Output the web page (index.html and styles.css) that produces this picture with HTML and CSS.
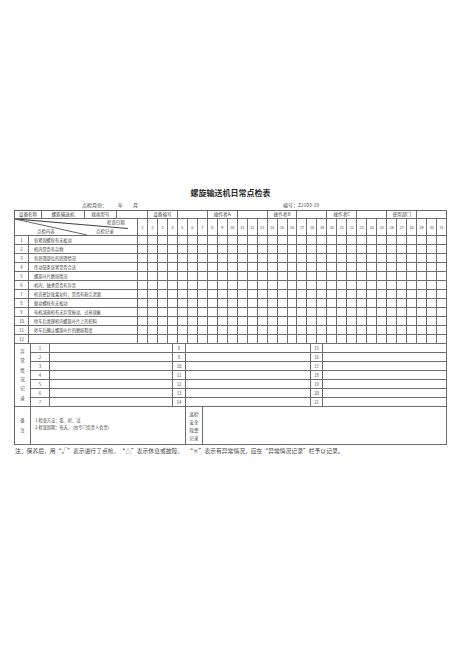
FILE: index.html
```html
<!DOCTYPE html>
<html lang="zh">
<head>
<meta charset="utf-8">
<title>螺旋输送机日常点检表</title>
<link rel="stylesheet" href="styles.css">
</head>
<body>
<div class="sheet">
  <h1 class="title">螺旋输送机日常点检表</h1>
  <div class="meta">
    <span></span>
    <span class="month">点检月份：<span class="yr">年</span><span class="mo">月</span></span>
    <span class="code">编号：ZJ103-19</span>
  </div>
  <div class="form">
    <div class="rowa">
      <span>设备名称</span><span>螺旋输送机</span><span>规格型号</span><span class="s2"></span>
      <span class="s3">设备编号</span><span class="s3"></span>
      <span class="s3">操作者A</span><span class="s3"></span>
      <span class="s3">操作者B</span><span class="s3"></span>
      <span class="s3">操作者C</span><span class="s3"></span>
      <span class="s3">使用部门</span><span class="s3"></span>
    </div>
    <div class="chk">
      <span class="diag">
        <svg class="diag-lines" viewBox="0 0 122 16" width="122" height="16"><line x1="0" y1="0" x2="113" y2="9.5" stroke="#444" stroke-width="1.2"/><line x1="0" y1="0" x2="72" y2="16" stroke="#555" stroke-width="0.9"/></svg>
        <em class="lb lb-date">检查日期</em><em class="lb lb-item">点检内容</em><em class="lb lb-rec">点检记录</em>
      </span>
      <span class="h">1</span><span class="h">2</span><span class="h">3</span><span class="h">4</span><span class="h">5</span><span class="h">6</span><span class="h">7</span><span class="h">8</span><span class="h">9</span><span class="h">10</span><span class="h">11</span><span class="h">12</span><span class="h">13</span><span class="h">14</span><span class="h">15</span><span class="h">16</span><span class="h">17</span><span class="h">18</span><span class="h">19</span><span class="h">20</span><span class="h">21</span><span class="h">22</span><span class="h">23</span><span class="h">24</span><span class="h">25</span><span class="h">26</span><span class="h">27</span><span class="h">28</span><span class="h">29</span><span class="h">30</span><span class="h">31</span>

      <span class="n">1</span><span class="t">各紧固螺栓有无松动</span><span></span><span></span><span></span><span></span><span></span><span></span><span></span><span></span><span></span><span></span><span></span><span></span><span></span><span></span><span></span><span></span><span></span><span></span><span></span><span></span><span></span><span></span><span></span><span></span><span></span><span></span><span></span><span></span><span></span><span></span><span></span>
      <span class="n">2</span><span class="t">机内是否有杂物</span><span></span><span></span><span></span><span></span><span></span><span></span><span></span><span></span><span></span><span></span><span></span><span></span><span></span><span></span><span></span><span></span><span></span><span></span><span></span><span></span><span></span><span></span><span></span><span></span><span></span><span></span><span></span><span></span><span></span><span></span><span></span>
      <span class="n">3</span><span class="t">各润滑部位的润滑情况</span><span></span><span></span><span></span><span></span><span></span><span></span><span></span><span></span><span></span><span></span><span></span><span></span><span></span><span></span><span></span><span></span><span></span><span></span><span></span><span></span><span></span><span></span><span></span><span></span><span></span><span></span><span></span><span></span><span></span><span></span><span></span>
      <span class="n">4</span><span class="t">传动链条张紧是否合适</span><span></span><span></span><span></span><span></span><span></span><span></span><span></span><span></span><span></span><span></span><span></span><span></span><span></span><span></span><span></span><span></span><span></span><span></span><span></span><span></span><span></span><span></span><span></span><span></span><span></span><span></span><span></span><span></span><span></span><span></span><span></span>
      <span class="n">5</span><span class="t">螺旋叶片磨损情况</span><span></span><span></span><span></span><span></span><span></span><span></span><span></span><span></span><span></span><span></span><span></span><span></span><span></span><span></span><span></span><span></span><span></span><span></span><span></span><span></span><span></span><span></span><span></span><span></span><span></span><span></span><span></span><span></span><span></span><span></span><span></span>
      <span class="n">6</span><span class="t">机内、轴承是否有异音</span><span></span><span></span><span></span><span></span><span></span><span></span><span></span><span></span><span></span><span></span><span></span><span></span><span></span><span></span><span></span><span></span><span></span><span></span><span></span><span></span><span></span><span></span><span></span><span></span><span></span><span></span><span></span><span></span><span></span><span></span><span></span>
      <span class="n">7</span><span class="t">机壳密封效果如何，是否有粉尘泄漏</span><span></span><span></span><span></span><span></span><span></span><span></span><span></span><span></span><span></span><span></span><span></span><span></span><span></span><span></span><span></span><span></span><span></span><span></span><span></span><span></span><span></span><span></span><span></span><span></span><span></span><span></span><span></span><span></span><span></span><span></span><span></span>
      <span class="n">8</span><span class="t">驱动螺栓有无松动</span><span></span><span></span><span></span><span></span><span></span><span></span><span></span><span></span><span></span><span></span><span></span><span></span><span></span><span></span><span></span><span></span><span></span><span></span><span></span><span></span><span></span><span></span><span></span><span></span><span></span><span></span><span></span><span></span><span></span><span></span><span></span>
      <span class="n">9</span><span class="t">电机减速机有无异常振动、过热现象</span><span></span><span></span><span></span><span></span><span></span><span></span><span></span><span></span><span></span><span></span><span></span><span></span><span></span><span></span><span></span><span></span><span></span><span></span><span></span><span></span><span></span><span></span><span></span><span></span><span></span><span></span><span></span><span></span><span></span><span></span><span></span>
      <span class="n">10</span><span class="t">停车后清理机内螺旋叶片上的积料</span><span></span><span></span><span></span><span></span><span></span><span></span><span></span><span></span><span></span><span></span><span></span><span></span><span></span><span></span><span></span><span></span><span></span><span></span><span></span><span></span><span></span><span></span><span></span><span></span><span></span><span></span><span></span><span></span><span></span><span></span><span></span>
      <span class="n">11</span><span class="t">停车后确认螺旋叶片的磨损程度</span><span></span><span></span><span></span><span></span><span></span><span></span><span></span><span></span><span></span><span></span><span></span><span></span><span></span><span></span><span></span><span></span><span></span><span></span><span></span><span></span><span></span><span></span><span></span><span></span><span></span><span></span><span></span><span></span><span></span><span></span><span></span>
      <span class="n">12</span><span class="t"></span><span></span><span></span><span></span><span></span><span></span><span></span><span></span><span></span><span></span><span></span><span></span><span></span><span></span><span></span><span></span><span></span><span></span><span></span><span></span><span></span><span></span><span></span><span></span><span></span><span></span><span></span><span></span><span></span><span></span><span></span><span></span>
    </div>
    <div class="abn">
      <span class="vlabel"><i>异</i><i>常</i><i>情</i><i>况</i><i>记</i><i>录</i></span>
      <span class="n">1</span><span></span><span class="n">8</span><span></span><span class="n">15</span><span></span>
      <span class="n">2</span><span></span><span class="n">9</span><span></span><span class="n">16</span><span></span>
      <span class="n">3</span><span></span><span class="n">10</span><span></span><span class="n">17</span><span></span>
      <span class="n">4</span><span></span><span class="n">11</span><span></span><span class="n">18</span><span></span>
      <span class="n">5</span><span></span><span class="n">12</span><span></span><span class="n">19</span><span></span>
      <span class="n">6</span><span></span><span class="n">13</span><span></span><span class="n">20</span><span></span>
      <span class="n">7</span><span></span><span class="n">14</span><span></span><span class="n">21</span><span></span>
    </div>
    <div class="rmk">
      <span class="vlabel short"><i>备</i><i>注</i></span>
      <span class="notes"><i>1.检查方法：看、听、试</i><i>2.检查周期：每天，（由专门负责人负责）</i></span>
      <span class="vlabel pairs"><i>巡检</i><i>安全</i><i>隐患</i><i>记录</i></span>
      <span></span>
    </div>
  </div>
  <p class="foot">注：保养后，用“√”表示进行了点检，“△”表示休息或故障，&nbsp;&nbsp;&nbsp;“×”表示有异常情况，应在“异常情况记录”栏予以记录。</p>
</div>
</body>
</html>
```
FILE: styles.css
```css
* { box-sizing: border-box; }
html, body { margin: 0; padding: 0; background: #fff; }
body {
  font-family: "Noto Sans CJK SC", "Noto Sans", sans-serif;
  color: #444;
}
.sheet {
  width: 433px;
  margin-left: 14px;
  padding-top: 187px;
}
.title {
  margin: 0;
  height: 12px;
  font-size: 8px;
  line-height: 12px;
  font-weight: bold;
  color: #2a2a2a;
  text-align: center;
}
.meta {
  display: grid;
  grid-template-columns: 68px 201px auto;
  height: 11px;
  padding-top: 3px;
  font-size: 5px;
  line-height: 6px;
  white-space: nowrap;
}
.yr { margin-left: 11px; }
.mo { margin-left: 10px; }

.form {
  border-top: 1px solid #666;
  border-left: 1px solid #666;
  font-size: 4.2px;
  line-height: 5px;
}
.form span {
  display: flex;
  align-items: center;
  justify-content: center;
  border-right: 1px solid #6e6e6e;
  border-bottom: 1px solid #6e6e6e;
  white-space: nowrap;
  overflow: hidden;
}
.form i, .form em { font-style: normal; }

.rowa {
  display: grid;
  grid-template-columns: 27px 43px 32px 21px repeat(31, 1fr);
  grid-template-rows: 8px;
  font-size: 4.6px;
}
.rowa .s2 { grid-column: span 2; }
.rowa .s3 { grid-column: span 3; }

.chk {
  display: grid;
  grid-template-columns: 14px 109px repeat(31, 1fr);
  grid-template-rows: 17px repeat(12, 9px);
}
.chk .diag {
  grid-column: span 2;
  position: relative;
  display: block;
}
.diag-lines { position: absolute; left: 0; top: 0; }
.lb { position: absolute; font-size: 4.4px; line-height: 5px; }
.lb-date { left: 92px; top: 1px; }
.lb-item { left: 22px; top: 10px; }
.lb-rec { left: 81px; top: 10px; }
.chk .h { font-size: 3.6px; }
.chk .t {
  justify-content: flex-start;
  padding-left: 5px;
}

.abn {
  display: grid;
  grid-template-columns: 16px 19px 123px 13px 125px 12px 124px;
  grid-template-rows: repeat(7, 9px);
}
.form .vlabel {
  grid-row: span 7;
  flex-direction: column;
  justify-content: space-around;
  padding: 3px 0;
  font-size: 4.4px;
}
.rmk {
  display: grid;
  grid-template-columns: 16px 155px 17px 244px;
  grid-template-rows: 38px;
}
.form .vlabel.short {
  grid-row: auto;
  justify-content: center;
  gap: 5px;
}
.form .vlabel.pairs {
  grid-row: auto;
  padding: 4px 0 2px;
}
.form .notes {
  flex-direction: column;
  align-items: flex-start;
  justify-content: center;
  gap: 2px;
  padding-left: 4px;
  padding-bottom: 4px;
  font-size: 4.2px;
}
.foot {
  margin: 2px 0 0 1px;
  font-size: 5.8px;
  line-height: 7px;
  white-space: nowrap;
}
```
